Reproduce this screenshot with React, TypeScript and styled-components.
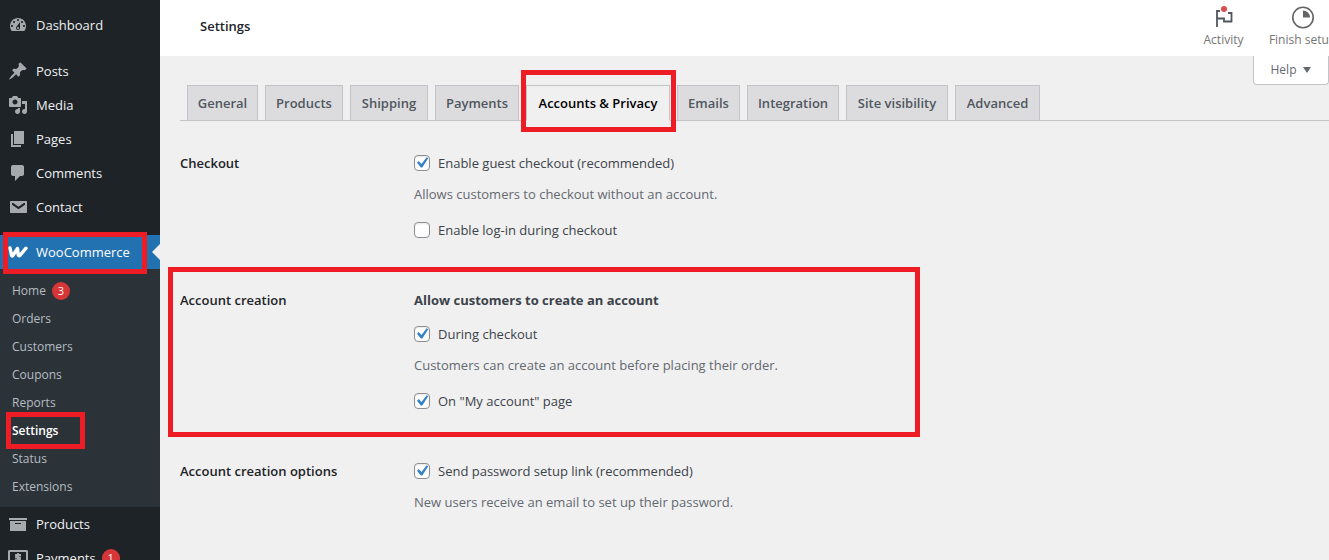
import React from "react";
import styled, { createGlobalStyle, css } from "styled-components";

const GlobalStyle = createGlobalStyle`
  *, *::before, *::after { box-sizing: border-box; }
  body {
    margin: 0;
    background: #f0f0f0;
    color: #3c434a;
    font: 13px/20px "Segoe UI", "Open Sans", "Noto Sans", sans-serif;
  }
  a { color: inherit; text-decoration: none; }
  h1, h2, h3, p, ul { margin: 0; padding: 0; font: inherit; }
  ul { list-style: none; }
  button { font: inherit; cursor: pointer; }
`;

const Shell = styled.div`
  display: flex;
  height: 100vh;
  overflow: hidden;
`;

const Sidebar = styled.nav`
  flex: 0 0 160px;
  padding-top: 8px;
  background: #1d2327;
  color: #f0f0f1;
`;

const MenuGroup = styled.ul<{ $gap?: number }>`
  margin-top: ${(p) => p.$gap ?? 0}px;
`;

const MenuItem = styled.li`
  position: relative;
`;

const MenuLink = styled.a<{ $current?: boolean }>`
  position: relative;
  display: flex;
  align-items: center;
  gap: 6px;
  height: 34px;
  padding-left: 8px;
  ${(p) =>
    p.$current &&
    css`
      background: #2271b1;
      color: #fff;
      &::after {
        content: "";
        position: absolute;
        right: 0;
        top: 9px;
        border: 8px solid transparent;
        border-left: 0;
        border-right-color: #f0f0f0;
      }
    `}
`;

const MenuIcon = styled.svg<{ $bright?: boolean }>`
  width: 20px;
  height: 20px;
  margin-right: 2px;
  flex: none;
  fill: ${(p) => (p.$bright ? "#fff" : "#a7aaad")};
`;

const Badge = styled.span`
  min-width: 18px;
  height: 18px;
  border-radius: 9px;
  background: #d63638;
  color: #fff;
  font-size: 11px;
  line-height: 18px;
  text-align: center;
`;

const Submenu = styled.ul`
  padding: 8px 0 6px;
  background: #2c3338;
`;

const SubLink = styled.a<{ $current?: boolean }>`
  display: flex;
  align-items: center;
  gap: 6px;
  height: 28px;
  padding-left: 12px;
  font-size: 12px;
  color: ${(p) => (p.$current ? "#fff" : "#b5bcc2")};
  font-weight: ${(p) => (p.$current ? 600 : 400)};
`;

const Highlight = styled.span<{ $inset: string; $width?: number }>`
  position: absolute;
  z-index: 2;
  inset: ${(p) => p.$inset};
  ${(p) => p.$width && `width: ${p.$width}px;`}
  border: 5px solid #ee1c25;
  pointer-events: none;
`;

const Main = styled.main`
  flex: 1;
  min-width: 0;
`;

const Header = styled.header`
  display: flex;
  align-items: center;
  justify-content: space-between;
  height: 56px;
  padding-left: 40px;
  background: #fff;
`;

const Title = styled.h1`
  color: #1d2327;
  font-weight: 600;
  margin-bottom: 4px;
`;

const Actions = styled.div`
  display: flex;
  flex: none;
  margin-right: -13px;
`;

const ActionButton = styled.button`
  display: flex;
  flex-direction: column;
  align-items: center;
  width: 79px;
  height: 56px;
  padding: 6px 0 0;
  gap: 1px;
  border: 0;
  background: none;
  color: #757575;
  font-size: 12px;
  white-space: nowrap;
`;

const HelpBar = styled.div`
  display: flex;
  justify-content: flex-end;
  height: 29px;
`;

const HelpButton = styled.button`
  display: flex;
  align-items: center;
  justify-content: center;
  gap: 7px;
  width: 76px;
  border: 1px solid #c3c4c7;
  border-top: 0;
  border-radius: 0 0 4px 4px;
  background: #fff;
  color: #646970;
  font-size: 12px;
`;

const Content = styled.div`
  padding-left: 20px;
`;

const Tabs = styled.nav`
  display: flex;
  gap: 7px;
  padding-left: 7px;
  border-bottom: 1px solid #c3c4c7;
`;

const Tab = styled.a<{ $width: number; $active?: boolean }>`
  position: relative;
  flex: 0 0 ${(p) => p.$width}px;
  height: 36px;
  margin-bottom: -1px;
  border: 1px solid #c3c4c7;
  background: #dcdcde;
  color: #50575e;
  font-weight: 600;
  line-height: 34px;
  text-align: center;
  white-space: nowrap;
  ${(p) =>
    p.$active &&
    css`
      background: #f0f0f0;
      border-bottom-color: #f0f0f0;
      color: #000;
    `}
`;

const Form = styled.form`
  display: flex;
  flex-direction: column;
  gap: 50px;
  padding-top: 32px;
`;

const Row = styled.section`
  position: relative;
  display: grid;
  grid-template-columns: 234px 1fr;
`;

const RowTitle = styled.h2`
  color: #1d2327;
  font-weight: 600;
`;

const GroupTitle = styled.h3`
  font-weight: 700;
  margin-bottom: 14px;
`;

const Option = styled.label`
  display: flex;
  align-items: center;
  gap: 8px;
`;

const Checkbox = styled.input`
  appearance: none;
  width: 16px;
  height: 16px;
  margin: 0;
  border: 1px solid #8c8f94;
  border-radius: 4px;
  background: #fff;
  box-shadow: inset 0 1px 2px rgba(0, 0, 0, 0.1);
  &:checked::before {
    content: "";
    display: block;
    width: 20px;
    height: 20px;
    margin: -3px;
    background: #3582c4;
    clip-path: path("M14.6 4.2l1.6 1.1-5.9 9.1H8.8L5 9.700l1.700-1.600 2.800 2.800z");
  }
`;

const Description = styled.p`
  margin: 11px 0 16px;
  color: #646970;
  &:last-child { margin-bottom: 0; }
`;

const icons = {
  dashboard:
    "M3.76 16h12.48c1.1-1.37 1.76-3.11 1.76-5 0-4.42-3.58-8-8-8s-8 3.58-8 8c0 1.89.66 3.63 1.76 5zM10 4c.55 0 1 .45 1 1s-.45 1-1 1-1-.45-1-1 .45-1 1-1zM6 6c.55 0 1 .45 1 1s-.45 1-1 1-1-.45-1-1 .45-1 1-1zm8 0c.55 0 1 .45 1 1s-.45 1-1 1-1-.45-1-1 .45-1 1-1zm-5.37 5.55L12 7v6c0 1.1-.9 2-2 2s-2-.9-2-2c0-.57.24-1.08.63-1.45zM4 10c.55 0 1 .45 1 1s-.45 1-1 1-1-.45-1-1 .45-1 1-1zm12 0c.55 0 1 .45 1 1s-.45 1-1 1-1-.45-1-1 .45-1 1-1zm-5 3c0-.55-.45-1-1-1s-1 .45-1 1 .45 1 1 1 1-.45 1-1z",
  posts:
    "M10.44 3.02l1.82-1.82 6.36 6.35-1.83 1.82c-1.05-.68-2.48-.57-3.41.36l-.75.75c-.92.93-1.04 2.35-.35 3.41l-1.83 1.82-2.41-2.41-2.8 2.79c-.42.42-3.38 2.71-3.8 2.29s1.86-3.39 2.28-3.81l2.79-2.79L4.1 9.36l1.83-1.82c1.05.69 2.48.57 3.4-.36l.75-.75c.93-.92 1.05-2.35.36-3.41z",
  media:
    "M13 11V4c0-.55-.45-1-1-1h-1.67L9 1H5L3.67 3H2c-.55 0-1 .45-1 1v7c0 .55.45 1 1 1h10c.55 0 1-.45 1-1zM7 4.5c1.38 0 2.5 1.12 2.5 2.5S8.38 9.5 7 9.5 4.5 8.38 4.5 7 5.62 4.5 7 4.5zM14 6h5v10.5c0 1.38-1.12 2.5-2.5 2.5S14 17.88 14 16.5s1.12-2.5 2.5-2.5c.17 0 .34.02.5.05V9h-3V6zm-4 8.05V13h2v3.5c0 1.38-1.12 2.5-2.5 2.5S7 17.88 7 16.5 8.12 14 9.5 14c.17 0 .34.02.5.05z",
  pages: "M6 15V2h10v13H6zm-1 1h8v2H3V5h2v11z",
  comments:
    "M5 2h9c1.1 0 2 .9 2 2v7c0 1.1-.9 2-2 2h-2l-5 5v-5H5c-1.1 0-2-.9-2-2V4c0-1.1.9-2 2-2z",
  contact:
    "M3 4h15c.6 0 1 .4 1 1v10c0 .6-.4 1-1 1H3c-.6 0-1-.4-1-1V5c0-.6.4-1 1-1zM4 6v1.800L10.500 12.300 17 7.800V6h-1.200L10.500 9.800 5.200 6z",
  products: "M19 4v2H1V4h18zM2 7h16v10H2V7zm11 3V9H7v1h6z",
};

function Icon({ d }: { d: string }) {
  return (
    <MenuIcon viewBox="0 0 20 20" aria-hidden="true">
      <path fillRule="evenodd" d={d} />
    </MenuIcon>
  );
}

function WooIcon() {
  return (
    <MenuIcon viewBox="0 0 20 20" $bright aria-hidden="true">
      <path
        d="M2 6L3.600 13.500Q4.200 14.500 5 13.300L9.500 6.500L10.300 13Q10.900 14.400 12.300 13L18 6.200"
        fill="none"
        stroke="#fff"
        strokeWidth="3.400"
        strokeLinejoin="round"
        strokeLinecap="round"
      />
    </MenuIcon>
  );
}

function PaymentsIcon() {
  return (
    <MenuIcon viewBox="0 0 20 20" aria-hidden="true">
      <path fillRule="evenodd" d="M1.500 2h17c.8 0 1.500.7 1.500 1.500V17H0V3.500C0 2.700.7 2 1.500 2zM2 4v11h16V4z" />
      <path
        d="M13 7H8v2.500h4v2.700H7M10 5v9"
        fill="none"
        stroke="#a7aaad"
        strokeWidth="1.800"
      />
    </MenuIcon>
  );
}

type CheckProps = { label: string; checked?: boolean };

function CheckOption({ label, checked }: CheckProps) {
  return (
    <Option>
      <Checkbox type="checkbox" defaultChecked={checked} />
      {label}
    </Option>
  );
}

const contentMenu = [
  { label: "Posts", icon: icons.posts },
  { label: "Media", icon: icons.media },
  { label: "Pages", icon: icons.pages },
  { label: "Comments", icon: icons.comments },
  { label: "Contact", icon: icons.contact },
];

const subMenu: { label: string; count?: number; current?: boolean }[] = [
  { label: "Home", count: 3 },
  { label: "Orders" },
  { label: "Customers" },
  { label: "Coupons" },
  { label: "Reports" },
  { label: "Settings", current: true },
  { label: "Status" },
  { label: "Extensions" },
];

const tabs = [
  { label: "General", width: 71 },
  { label: "Products", width: 78 },
  { label: "Shipping", width: 78 },
  { label: "Payments", width: 84 },
  { label: "Accounts & Privacy", width: 144, active: true },
  { label: "Emails", width: 63 },
  { label: "Integration", width: 92 },
  { label: "Site visibility", width: 102 },
  { label: "Advanced", width: 85 },
];

export default function App() {
  return (
    <Shell>
      <GlobalStyle />
      <Sidebar aria-label="Admin menu">
        <MenuGroup>
          <MenuItem>
            <MenuLink href="#dashboard">
              <Icon d={icons.dashboard} />
              Dashboard
            </MenuLink>
          </MenuItem>
        </MenuGroup>
        <MenuGroup $gap={12}>
          {contentMenu.map((item) => (
            <MenuItem key={item.label}>
              <MenuLink href={`#${item.label.toLowerCase()}`}>
                <Icon d={item.icon} />
                {item.label}
              </MenuLink>
            </MenuItem>
          ))}
        </MenuGroup>
        <MenuGroup $gap={11}>
          <MenuItem>
            <MenuLink href="#woocommerce" $current>
              <WooIcon />
              WooCommerce
              <Highlight $inset="-3px 13px -5px 3px" />
            </MenuLink>
            <Submenu>
              {subMenu.map((item) => (
                <MenuItem key={item.label}>
                  <SubLink href={`#${item.label.toLowerCase()}`} $current={item.current}>
                    {item.label}
                    {item.count && <Badge>{item.count}</Badge>}
                  </SubLink>
                  {item.current && <Highlight $inset="-5px 75px -4px 6px" />}
                </MenuItem>
              ))}
            </Submenu>
          </MenuItem>
          <MenuItem>
            <MenuLink href="#products">
              <Icon d={icons.products} />
              Products
            </MenuLink>
          </MenuItem>
          <MenuItem>
            <MenuLink href="#payments">
              <PaymentsIcon />
              Payments
              <Badge>1</Badge>
            </MenuLink>
          </MenuItem>
        </MenuGroup>
      </Sidebar>

      <Main>
        <Header>
          <Title>Settings</Title>
          <Actions>
            <ActionButton type="button">
              <svg width="24" height="23" viewBox="0 0 24 23" fill="none" aria-hidden="true">
                <path
                  d="M8 5H5M5 4v17M5 12.500h7V15.500h7.500V7H16"
                  stroke="#50575e"
                  strokeWidth="1.800"
                />
                <circle cx="12" cy="3" r="3" fill="#d94f4f" />
              </svg>
              Activity
            </ActionButton>
            <ActionButton type="button">
              <svg width="24" height="23" viewBox="0 0 24 23" aria-hidden="true">
                <circle cx="12" cy="11.500" r="10.200" fill="none" stroke="#646464" strokeWidth="1.600" />
                <path d="M12 4.500v7h7a7 7 0 0 0-7-7z" fill="#646464" />
              </svg>
              Finish setup
            </ActionButton>
          </Actions>
        </Header>

        <HelpBar>
          <HelpButton type="button">
            Help
            <svg width="8" height="6" viewBox="0 0 8 6" aria-hidden="true">
              <path d="M0 0h8L4 6z" fill="#646970" />
            </svg>
          </HelpButton>
        </HelpBar>

        <Content>
          <Tabs aria-label="Settings sections">
            {tabs.map((tab) => (
              <Tab
                key={tab.label}
                href={`#${tab.label.toLowerCase().replace(/\W+/g, "-")}`}
                $width={tab.width}
                $active={tab.active}
              >
                {tab.label}
                {tab.active && <Highlight $inset="-16px -7px -12px -6px" />}
              </Tab>
            ))}
          </Tabs>

          <Form>
            <Row>
              <RowTitle>Checkout</RowTitle>
              <div>
                <CheckOption label="Enable guest checkout (recommended)" checked />
                <Description>Allows customers to checkout without an account.</Description>
                <CheckOption label="Enable log-in during checkout" />
              </div>
            </Row>
            <Row>
              <RowTitle>Account creation</RowTitle>
              <div>
                <GroupTitle>Allow customers to create an account</GroupTitle>
                <CheckOption label="During checkout" checked />
                <Description>
                  Customers can create an account before placing their order.
                </Description>
                <CheckOption label={'On "My account" page'} checked />
              </div>
              <Highlight $inset="-23px auto -26px -12px" $width={752} />
            </Row>
            <Row>
              <RowTitle>Account creation options</RowTitle>
              <div>
                <CheckOption label="Send password setup link (recommended)" checked />
                <Description>New users receive an email to set up their password.</Description>
              </div>
            </Row>
          </Form>
        </Content>
      </Main>
    </Shell>
  );
}
